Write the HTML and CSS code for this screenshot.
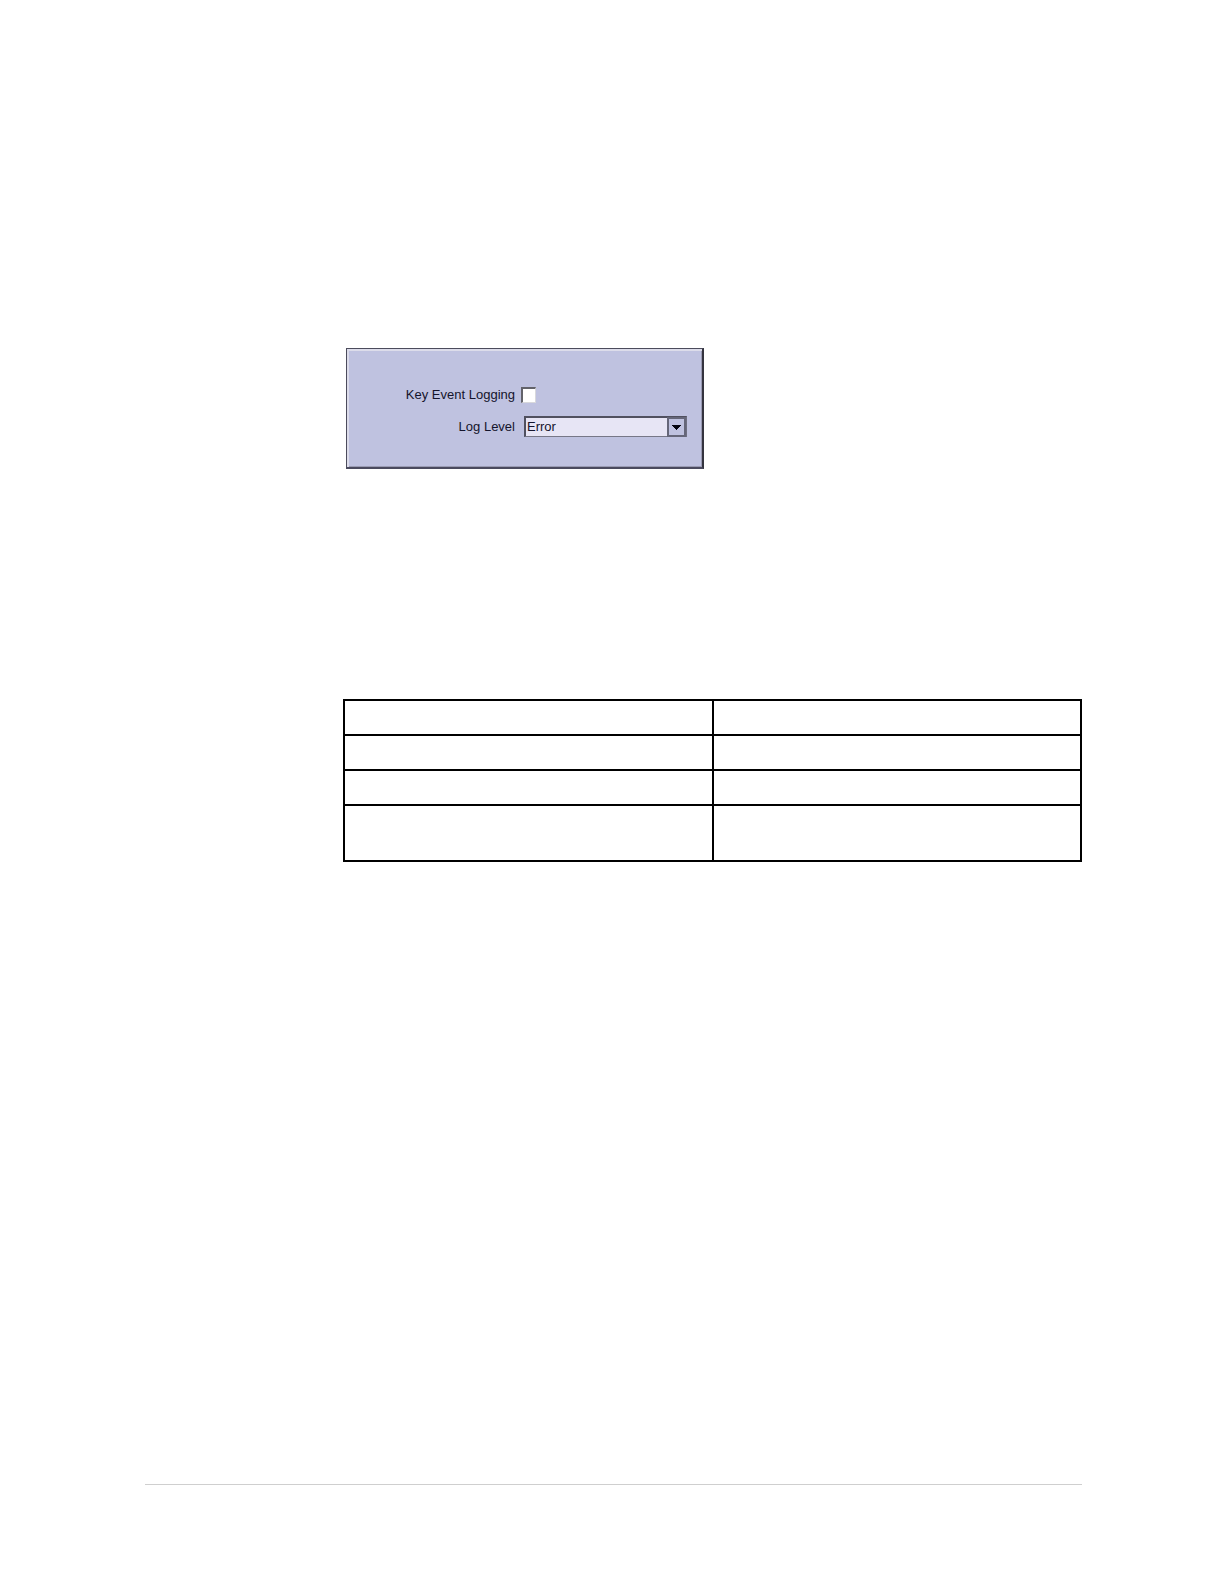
FILE: index.html
```html
<!DOCTYPE html>
<html lang="en">
<head>
<meta charset="utf-8">
<meta name="viewport" content="width=device-width, initial-scale=1">
<title>Key Event Logging</title>
<link rel="stylesheet" href="styles.css">
</head>
<body>
<main class="content">
  <form class="panel">
    <div class="field">
      <label class="label" for="key-event">Key Event Logging</label>
      <input class="check" type="checkbox" id="key-event">
    </div>
    <div class="field field-level">
      <label class="label" for="log-level">Log Level</label>
      <div class="combo">
        <select class="select" id="log-level">
          <option>Error</option>
        </select>
        <span class="arrow"><svg width="9" height="5" viewBox="0 0 9 5" aria-hidden="true"><path d="M0 0h9v1H8v1H7v1H6v1H5v1H4V4H3V3H2V2H1V1H0z" fill="#050510"/></svg></span>
      </div>
    </div>
  </form>
  <table class="grid">
    <tbody>
      <tr><td></td><td></td></tr>
      <tr><td></td><td></td></tr>
      <tr><td></td><td></td></tr>
      <tr class="tall"><td></td><td></td></tr>
    </tbody>
  </table>
</main>
<footer class="footer"></footer>
</body>
</html>
```
FILE: styles.css
```css
* {
  box-sizing: border-box;
}

body {
  display: flex;
  flex-direction: column;
  min-height: 100vh;
  margin: 0;
  padding: 348px 142px 0 145px;
  background: #fff;
  color: #14142c;
  font: 13px/16px "Liberation Sans", Arial, sans-serif;
}

.content {
  flex: 1;
  padding-left: 198px;
}

.panel {
  display: flex;
  flex-direction: column;
  gap: 13px;
  width: 358px;
  margin-left: 3px;
  padding: 38px 15px 30px 0;
  border: 1px solid #4c4c5c;
  border-right: 2px solid #34343f;
  border-bottom: 2px solid #4a4a5e;
  background: #bfc2e0;
  box-shadow: inset 2px 2px #dcdcea, inset -1px -1px #9a9bb4;
}

.field {
  display: grid;
  grid-template-columns: 168px 1fr;
  align-items: center;
  column-gap: 6px;
}

.field-level {
  column-gap: 9px;
}

.label {
  text-align: right;
}

.check {
  appearance: none;
  width: 15px;
  height: 16px;
  margin: 0;
  border: 1px solid #d8d8dc;
  border-top: 2px solid #62626a;
  border-left: 2px solid #62626a;
  background: #fff;
}

.combo {
  position: relative;
}

.select {
  appearance: none;
  display: block;
  width: 100%;
  height: 21px;
  margin: 0;
  padding: 0 22px 0 1px;
  border: 2px solid #50505f;
  border-right-color: #6d6e80;
  border-bottom: 1px solid #777787;
  border-radius: 0;
  background: #e7e5f5;
  color: inherit;
  font: inherit;
}

.arrow {
  position: absolute;
  top: 1px;
  right: 1px;
  bottom: 0;
  display: flex;
  align-items: center;
  justify-content: center;
  width: 19px;
  border: 2px solid #656679;
  background: #bfc2e0;
  pointer-events: none;
}

.grid {
  width: 100%;
  margin-top: 230px;
  border-collapse: collapse;
  table-layout: fixed;
}

.grid td {
  height: 35px;
  padding: 0;
  border: 2px solid #000;
}

.grid .tall td {
  height: 56px;
}

.footer {
  height: 100px;
  border-top: 1px solid #cfcfcf;
}
```
